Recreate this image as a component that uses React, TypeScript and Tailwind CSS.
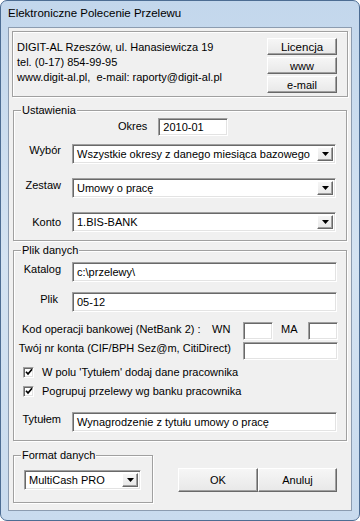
import type { ReactNode } from 'react'

const sunken =
  'border border-t-[#a0a0a0] border-l-[#a0a0a0] border-b-white border-r-white bg-white shadow-[inset_1px_1px_0_#696969,inset_-1px_-1px_0_#e3e3e3]'
const raised =
  'border border-t-white border-l-white border-b-[#696969] border-r-[#696969] bg-gradient-to-b from-[#f6f6f6] to-[#e8e8e8] shadow-[inset_-1px_-1px_0_#a0a0a0]'

function Field({ className = '', children }: { className?: string; children?: ReactNode }) {
  return (
    <div className={`${sunken} flex items-center pl-[4px] leading-[14px] whitespace-nowrap overflow-hidden ${className}`}>
      {children}
    </div>
  )
}

function Combo({ className = '', value }: { className?: string; value: string }) {
  return (
    <div className={`${sunken} flex items-stretch p-[2px] ${className}`}>
      <span className="flex-1 flex items-center pl-[2px] leading-[14px] whitespace-nowrap overflow-hidden">{value}</span>
      <span className={`${raised} w-[16px] flex items-center justify-center`}>
        <svg width="7" height="4" viewBox="0 0 7 4">
          <path d="M0 0 H7 L3.5 4 Z" fill="#000" />
        </svg>
      </span>
    </div>
  )
}

function Button({ className = '', children }: { className?: string; children: ReactNode }) {
  return <div className={`${raised} flex items-center justify-center leading-[14px] ${className}`}>{children}</div>
}

function Group({ label, className = '', children }: { label: string; className?: string; children: ReactNode }) {
  return (
    <div className={`relative border border-[#a0a0a0] shadow-[inset_1px_1px_0_#fff,1px_1px_0_#fff] ${className}`}>
      <span className="absolute -top-[8px] left-[7px] px-[1px] bg-[#f0f0f0] leading-[15px]">{label}</span>
      {children}
    </div>
  )
}

function Check({ label }: { label: string }) {
  return (
    <div className="flex items-center gap-[8px] pl-[9px] h-[14px]">
      <span className={`${sunken} w-[11px] h-[11px] flex items-center justify-center`}>
        <svg width="8" height="8" viewBox="0 0 8 8">
          <path d="M1 3.8 L3 6 L7 1.2" fill="none" stroke="#000" strokeWidth="1.7" />
        </svg>
      </span>
      <span className="leading-[15px]">{label}</span>
    </div>
  )
}

export default function App() {
  return (
    <div
      className="w-[360px] h-[521px] flex flex-col rounded-[7px] border border-[#4d6d93] bg-gradient-to-b from-[#c3d7ec] via-[#d4e3f2] to-[#c9dbee] text-black"
      style={{ fontFamily: '"Liberation Sans", Arial, sans-serif' }}
    >
      {/* Title */}
      <div className="h-[26px] flex items-center pl-[7px] text-[11.5px]">Elektroniczne Polecenie Przelewu</div>

      {/* Client */}
      <div className="mx-[7px] h-[484px] border border-[#8c9cb0] bg-[#f0f0f0] text-[11px] flex flex-col px-[3px] pt-[3px]">
        {/* Info panel */}
        <div className="h-[66px] border border-[#a0a0a0] shadow-[inset_1px_1px_0_#fff,1px_1px_0_#fff] flex justify-between pl-[4px] pr-[10px]">
          <div className="pt-[8px] leading-[15px]">
            <div>DIGIT-AL Rzeszów, ul. Hanasiewicza 19</div>
            <div>tel. (0-17) 854-99-95</div>
            <div>www.digit-al.pl,&nbsp; e-mail: raporty@digit-al.pl</div>
          </div>
          <div className="pt-[6px] flex flex-col gap-[2px] w-[70px]">
            <Button className="h-[17px] text-[11.5px]">Licencja</Button>
            <Button className="h-[17px]">www</Button>
            <Button className="h-[17px]">e-mail</Button>
          </div>
        </div>

        {/* Ustawienia */}
        <Group label="Ustawienia" className="mx-[1px] mt-[13px] h-[131px] pt-[7px]">
          <div className="flex items-start pl-[104px]">
            <span className="leading-[15px] mt-[1px]">Okres</span>
            <Field className="ml-[11px] w-[70px] h-[18px]">2010-01</Field>
          </div>
          <div className="flex items-start mt-[8px]">
            <span className="w-[47px] text-right leading-[15px] -mt-[1px]">Wybór</span>
            <Combo className="ml-[11px] w-[264px] h-[20px]" value="Wszystkie okresy z danego miesiąca bazowego" />
          </div>
          <div className="flex items-start mt-[14px]">
            <span className="w-[47px] text-right leading-[15px]">Zestaw</span>
            <Combo className="ml-[11px] w-[264px] h-[20px]" value="Umowy o pracę" />
          </div>
          <div className="flex items-start mt-[14px]">
            <span className="w-[47px] text-right leading-[15px] mt-[3px]">Konto</span>
            <Combo className="ml-[11px] w-[264px] h-[20px]" value="1.BIS-BANK" />
          </div>
        </Group>

        {/* Plik danych */}
        <Group label="Plik danych" className="mx-[1px] mt-[9px] h-[191px] pt-[11px]">
          <div className="flex items-start">
            <span className="w-[47px] text-right leading-[15px]">Katalog</span>
            <Field className="ml-[11px] w-[265px] h-[20px]">c:\przelewy\</Field>
          </div>
          <div className="flex items-start mt-[10px]">
            <span className="w-[44px] text-right leading-[15px]">Plik</span>
            <Field className="ml-[14px] w-[265px] h-[20px]">05-12</Field>
          </div>
          <div className="flex items-start mt-[10px] pl-[8px]">
            <span className="w-[190px] leading-[15px]">Kod operacji bankowej (NetBank 2) :</span>
            <span className="w-[31px] leading-[15px]">WN</span>
            <Field className="w-[30px] h-[18px]" />
            <span className="w-[35px] pl-[8px] leading-[15px]">MA</span>
            <Field className="w-[30px] h-[18px]" />
          </div>
          <div className="flex items-start mt-[2px]">
            <span className="w-[217px] text-right leading-[15px] -mt-[1px]">Twój nr konta (CIF/BPH Sez@m, CitiDirect)</span>
            <Field className="ml-[12px] w-[95px] h-[18px]" />
          </div>
          <div className="mt-[5px]">
            <Check label="W polu 'Tytułem' dodaj dane pracownika" />
          </div>
          <div className="mt-[5px]">
            <Check label="Pogrupuj przelewy wg banku pracownika" />
          </div>
          <div className="flex items-start mt-[14px]">
            <span className="w-[47px] text-right leading-[15px]">Tytułem</span>
            <Field className="ml-[11px] w-[265px] h-[20px]">Wynagrodzenie z tytułu umowy o pracę</Field>
          </div>
        </Group>

        {/* Bottom row */}
        <div className="flex items-start mt-[14px] mx-[1px]">
          <Group label="Format danych" className="w-[140px] h-[48px] pt-[14px] pl-[10px]">
            <Combo className="w-[117px] h-[20px]" value="MultiCash PRO" />
          </Group>
          <div className="flex ml-[25px] mt-[13px]">
            <Button className="w-[80px] h-[24px]">OK</Button>
            <Button className="w-[79px] h-[24px]">Anuluj</Button>
          </div>
        </div>
      </div>
    </div>
  )
}
